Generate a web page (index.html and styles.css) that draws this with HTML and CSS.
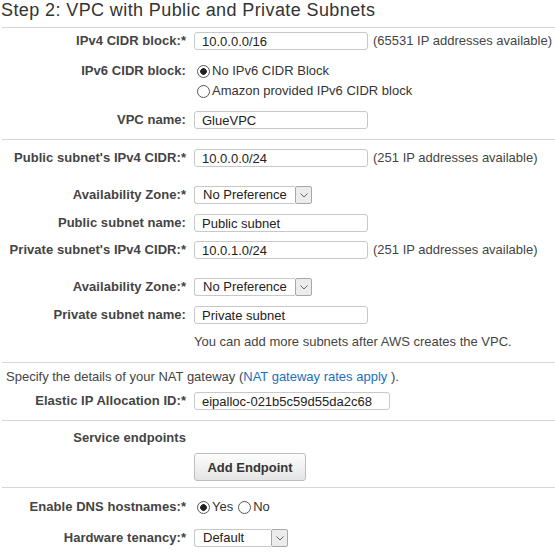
FILE: index.html
```html
<!DOCTYPE html>
<html>
<head>
<meta charset="utf-8">
<link rel="stylesheet" href="styles.css">
</head>
<body>
<div class="page">
  <h1 class="title">Step 2: VPC with Public and Private Subnets</h1>
  <div class="sep"></div>

  <div class="row mt4">
    <div class="lbl">IPv4 CIDR block:*</div>
    <div class="ctl"><input class="input w174" type="text" value="10.0.0.0/16"><span class="hint">(65531 IP addresses available)</span></div>
  </div>

  <div class="row row-radio mt11">
    <div class="lbl">IPv6 CIDR block:</div>
    <div class="radios">
      <label class="opt"><span class="radio on"></span>No IPv6 CIDR Block</label>
      <label class="opt"><span class="radio"></span>Amazon provided IPv6 CIDR block</label>
    </div>
  </div>

  <div class="row mt10">
    <div class="lbl">VPC name:</div>
    <div class="ctl"><input class="input w174" type="text" value="GlueVPC"></div>
  </div>

  <div class="sep mt10"></div>

  <div class="row mt9">
    <div class="lbl">Public subnet's IPv4 CIDR:*</div>
    <div class="ctl"><input class="input w174" type="text" value="10.0.0.0/24"><span class="hint">(251 IP addresses available)</span></div>
  </div>

  <div class="row mt19">
    <div class="lbl">Availability Zone:*</div>
    <div class="ctl">
      <div class="select w118"><span class="sel-val">No Preference</span><span class="sel-arrow"><svg width="8" height="5" viewBox="0 0 8 5"><path d="M0.5 0.5 L4 4 L7.5 0.5" fill="none" stroke="#666" stroke-width="1"/></svg></span></div>
    </div>
  </div>

  <div class="row mt10">
    <div class="lbl">Public subnet name:</div>
    <div class="ctl"><input class="input w174" type="text" value="Public subnet"></div>
  </div>

  <div class="row mt9">
    <div class="lbl">Private subnet's IPv4 CIDR:*</div>
    <div class="ctl"><input class="input w174" type="text" value="10.0.1.0/24"><span class="hint">(251 IP addresses available)</span></div>
  </div>

  <div class="row mt19">
    <div class="lbl">Availability Zone:*</div>
    <div class="ctl">
      <div class="select w118"><span class="sel-val">No Preference</span><span class="sel-arrow"><svg width="8" height="5" viewBox="0 0 8 5"><path d="M0.5 0.5 L4 4 L7.5 0.5" fill="none" stroke="#666" stroke-width="1"/></svg></span></div>
    </div>
  </div>

  <div class="row mt10">
    <div class="lbl">Private subnet name:</div>
    <div class="ctl"><input class="input w174" type="text" value="Private subnet"></div>
  </div>

  <div class="row mt9">
    <div></div>
    <div class="note">You can add more subnets after AWS creates the VPC.</div>
  </div>

  <div class="sep mt11"></div>

  <p class="nat mt5">Specify the details of your NAT gateway (<a class="link" href="#">NAT gateway rates apply</a> ).</p>

  <div class="row mt6">
    <div class="lbl">Elastic IP Allocation ID:*</div>
    <div class="ctl"><input class="input w196" type="text" value="eipalloc-021b5c59d55da2c68"></div>
  </div>

  <div class="sep mt10"></div>

  <div class="row mt8">
    <div class="lbl">Service endpoints</div>
    <div></div>
  </div>

  <div class="row mt6">
    <div></div>
    <div class="ctl"><button class="btn" type="button">Add Endpoint</button></div>
  </div>

  <div class="sep mt6"></div>

  <div class="row mt9">
    <div class="lbl">Enable DNS hostnames:*</div>
    <div class="ctl">
      <label class="opt"><span class="radio on"></span>Yes</label>
      <label class="opt opt-next"><span class="radio"></span>No</label>
    </div>
  </div>

  <div class="row mt12">
    <div class="lbl">Hardware tenancy:*</div>
    <div class="ctl">
      <div class="select w94"><span class="sel-val">Default</span><span class="sel-arrow"><svg width="8" height="5" viewBox="0 0 8 5"><path d="M0.5 0.5 L4 4 L7.5 0.5" fill="none" stroke="#666" stroke-width="1"/></svg></span></div>
    </div>
  </div>
</div>
</body>
</html>
```

FILE: styles.css
```css
* { box-sizing: border-box; }

body {
  margin: 0;
  background: #fff;
  font-family: "Liberation Sans", Arial, sans-serif;
  font-size: 13px;
  color: #444;
}

.title {
  margin: 0;
  padding-left: 1px;
  height: 27px;
  font-size: 18px;
  line-height: 20px;
  letter-spacing: 0.4px;
  font-weight: normal;
  color: #333;
}

.sep {
  height: 1px;
  background: #d6d6d6;
  margin-left: 2px;
}

.row {
  display: grid;
  grid-template-columns: 186px 1fr;
  column-gap: 8px;
  align-items: center;
  min-height: 18px;
  line-height: 18px;
}

.row-radio { align-items: start; }
.row-radio .lbl { line-height: 20px; }

.lbl {
  text-align: right;
  font-weight: bold;
  color: #444;
  white-space: nowrap;
  letter-spacing: 0.05px;
}

.ctl {
  display: flex;
  align-items: center;
  white-space: nowrap;
}

.input {
  height: 18px;
  border: 1px solid #c8c8c8;
  border-radius: 3px;
  padding: 0 7px;
  margin: 0;
  font: 13px "Liberation Sans", Arial, sans-serif;
  color: #222;
  background: #fff;
  outline: none;
}

.w174 { width: 174px; }
.w196 { width: 196px; }
.w118 { width: 118px; }
.w94 { width: 94px; }

.hint { margin-left: 5px; color: #444; }

.radios { display: flex; flex-direction: column; }

.opt {
  display: flex;
  align-items: center;
  line-height: 20px;
  color: #333;
}

.opt-next { margin-left: 5px; }

.radio {
  width: 13px;
  height: 13px;
  border: 1px solid #555;
  border-radius: 50%;
  margin: 0 2px 0 3px;
  flex: none;
  background: #fff;
}

.opt-next .radio { margin-left: 0; }

.radio.on {
  background: radial-gradient(circle, #222 0, #222 3px, #fff 3.6px);
}

.select {
  display: flex;
  height: 18px;
}

.sel-val {
  flex: 1;
  border: 1px solid #c8c8c8;
  border-right: none;
  border-radius: 3px 0 0 3px;
  padding-left: 8px;
  line-height: 16px;
  color: #222;
  background: #fff;
}

.sel-arrow {
  width: 17px;
  flex: none;
  border: 1px solid #a8a8a8;
  border-radius: 2px;
  background: #ececec;
  display: flex;
  align-items: center;
  justify-content: center;
}

.note { color: #444; }

.nat {
  margin-bottom: 0;
  padding-left: 6px;
  line-height: 18px;
  color: #444;
}

.link { color: #1a6fbf; text-decoration: none; }

.btn {
  width: 112px;
  height: 28px;
  padding: 0;
  margin: 0;
  border: 1px solid #bdbdbd;
  border-radius: 3px;
  background: linear-gradient(#fdfdfd, #e4e4e4);
  font: bold 13px "Liberation Sans", Arial, sans-serif;
  color: #333;
}

.mt4 { margin-top: 4px; }
.mt5 { margin-top: 5px; }
.mt6 { margin-top: 6px; }
.mt8 { margin-top: 8px; }
.mt9 { margin-top: 9px; }
.mt10 { margin-top: 10px; }
.mt11 { margin-top: 11px; }
.mt12 { margin-top: 12px; }
.mt13 { margin-top: 13px; }
.mt18 { margin-top: 18px; }
.mt19 { margin-top: 19px; }
```
